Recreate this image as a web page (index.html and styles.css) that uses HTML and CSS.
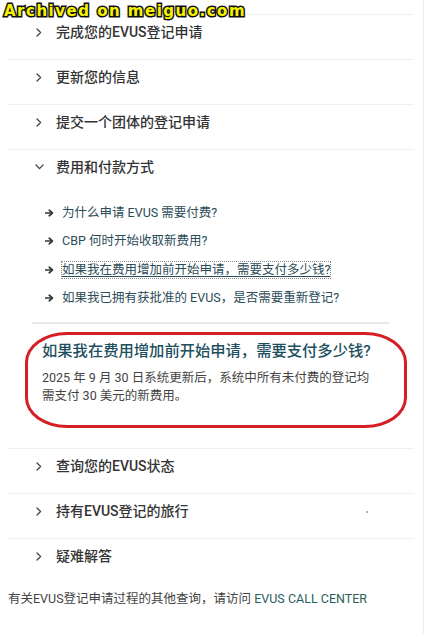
FILE: index.html
```html
<!DOCTYPE html>
<html lang="zh-CN">
<head>
<meta charset="utf-8">
<title>EVUS</title>
<link rel="stylesheet" href="styles.css">
</head>
<body>
<div class="page">
  <div class="watermark">Archived on meiguo.com</div>
  <div class="accordion">
    <div class="item"><svg class="chev" viewBox="0 0 6 9" width="6" height="9"><path d="M1 1 L4.6 4.5 L1 8" /></svg><span>完成您的EVUS登记申请</span></div>
    <div class="item"><svg class="chev" viewBox="0 0 6 9" width="6" height="9"><path d="M1 1 L4.6 4.5 L1 8" /></svg><span>更新您的信息</span></div>
    <div class="item"><svg class="chev" viewBox="0 0 6 9" width="6" height="9"><path d="M1 1 L4.6 4.5 L1 8" /></svg><span>提交一个团体的登记申请</span></div>
    <div class="item open">
      <div class="item-title"><svg class="chev down" viewBox="0 0 9 6" width="9" height="6"><path d="M1 1 L4.5 4.6 L8 1" /></svg><span>费用和付款方式</span></div>
      <ul class="links">
        <li><svg class="arrow" viewBox="0 0 9 8" width="9" height="8"><path d="M0.5 4 H7" /><path d="M4.2 1.2 L7.4 4 L4.2 6.8" /></svg><span>为什么申请 EVUS 需要付费?</span></li>
        <li><svg class="arrow" viewBox="0 0 9 8" width="9" height="8"><path d="M0.5 4 H7" /><path d="M4.2 1.2 L7.4 4 L4.2 6.8" /></svg><span>CBP 何时开始收取新费用?</span></li>
        <li><svg class="arrow" viewBox="0 0 9 8" width="9" height="8"><path d="M0.5 4 H7" /><path d="M4.2 1.2 L7.4 4 L4.2 6.8" /></svg><span class="active">如果我在费用增加前开始申请，需要支付多少钱?</span></li>
        <li><svg class="arrow" viewBox="0 0 9 8" width="9" height="8"><path d="M0.5 4 H7" /><path d="M4.2 1.2 L7.4 4 L4.2 6.8" /></svg><span>如果我已拥有获批准的 EVUS，是否需要重新登记?</span></li>
      </ul>
      <div class="inner-rule"></div>
      <div class="answer">
        <h3>如果我在费用增加前开始申请，需要支付多少钱?</h3>
        <p>2025 年 9 月 30 日系统更新后，系统中所有未付费的登记均<br>需支付 30 美元的新费用。</p>
      </div>
    </div>
    <div class="item"><svg class="chev" viewBox="0 0 6 9" width="6" height="9"><path d="M1 1 L4.6 4.5 L1 8" /></svg><span>查询您的EVUS状态</span></div>
    <div class="item"><svg class="chev" viewBox="0 0 6 9" width="6" height="9"><path d="M1 1 L4.6 4.5 L1 8" /></svg><span>持有EVUS登记的旅行</span><i class="speck"></i></div>
    <div class="item last"><svg class="chev" viewBox="0 0 6 9" width="6" height="9"><path d="M1 1 L4.6 4.5 L1 8" /></svg><span>疑难解答</span></div>
  </div>
  <p class="footer">有关EVUS登记申请过程的其他查询，请访问 <a href="#">EVUS CALL CENTER</a></p>
</div>
</body>
</html>
```
FILE: styles.css
```css
html, body {
  margin: 0;
  padding: 0;
  background: #fff;
}
body {
  font-family: Roboto, "Noto Sans CJK SC", sans-serif;
  color: #333;
}
.page {
  position: relative;
  width: 423px;
  height: 634px;
  border-right: 1px solid #ececec;
  overflow: hidden;
}
.watermark {
  position: absolute;
  left: 4px;
  top: 1px;
  font-family: "DejaVu Sans", sans-serif;
  font-weight: bold;
  font-size: 15px;
  letter-spacing: 1.5px;
  line-height: 20px;
  color: #f7f200;
  -webkit-text-stroke: 3px #111;
  paint-order: stroke fill;
  z-index: 2;
}
.accordion {
  margin: 14px 9px 0 8px;
}
.item {
  position: relative;
  border-top: 1.5px solid #f0f0f0;
  padding: 7px 0 17px 28px;
  line-height: 20px;
  font-size: 14px;
  font-weight: 500;
  color: #333;
  display: flex;
  align-items: center;
}
.item.open {
  display: block;
  padding: 7px 0 20px 0;
}
.item-title {
  display: flex;
  align-items: center;
  padding-left: 28px;
  line-height: 20px;
}
.chev {
  flex: none;
  margin-right: 14px;
  fill: none;
  stroke: #444;
  stroke-width: 1.3;
  stroke-linecap: round;
  stroke-linejoin: round;
}
.chev.down {
  margin-left: -1px;
  margin-right: 12px;
}
.links {
  list-style: none;
  margin: 22px 0 0 0;
  padding: 0 0 0 37px;
}
.links li {
  display: flex;
  align-items: center;
  line-height: 28.3px;
  height: 28.3px;
  font-size: 12.5px;
  font-weight: normal;
  color: #2c4c58;
}
.arrow {
  flex: none;
  margin-right: 8px;
  fill: none;
  stroke: #333;
  stroke-width: 1.7;
  stroke-linecap: round;
  stroke-linejoin: round;
}
.links .active {
  text-decoration: underline;
  text-underline-offset: 2px;
  outline: 1px dotted #888;
  line-height: 16px;
}
.inner-rule {
  margin: 10px 25px 0 24px;
  height: 2px;
  background: #e8e8e8;
}
.answer {
  margin: 8px 0 0 17px;
  width: 382px;
  border: 3.5px solid #d51f27;
  border-radius: 42px / 30px;
  padding: 6px 0 18px 14px;
  box-sizing: border-box;
  height: 96px;
}
.answer h3 {
  margin: 0;
  font-size: 15.3px;
  line-height: 21px;
  font-weight: 500;
  color: #1d4f5e;
}
.answer p {
  margin: 7px 0 0 0;
  font-size: 12.5px;
  line-height: 18px;
  font-weight: normal;
  color: #444;
}
.speck {
  position: absolute;
  left: 358px;
  top: 17px;
  width: 2px;
  height: 2px;
  border-radius: 1px;
  background: #999;
}
.footer {
  margin: 7px 0 0 8px;
  font-size: 12.5px;
  line-height: 18px;
  color: #444;
}
.footer a {
  color: #2c5d5b;
  text-decoration: none;
}
```
